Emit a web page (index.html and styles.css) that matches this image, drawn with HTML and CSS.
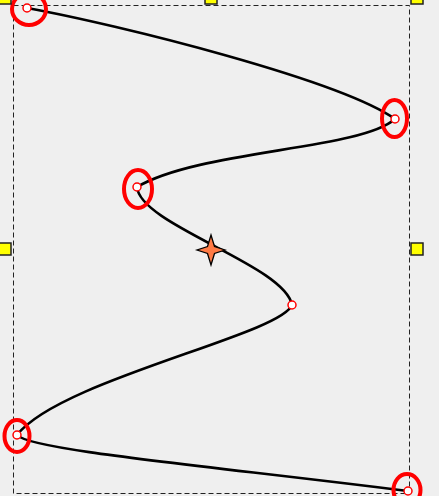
FILE: index.html
```html
<!DOCTYPE html>
<html lang="en">
<head>
<meta charset="utf-8">
<title>Curve editor</title>
<link rel="stylesheet" href="styles.css">
</head>
<body>
<main class="canvas">
  <svg class="drawing" width="439" height="496" viewBox="0 0 439 496" xmlns="http://www.w3.org/2000/svg">
    <rect class="frame" x="13.5" y="5.5" width="396" height="488"/>
    <path class="curve" d="M27,8 C120,25 340,80 395,119 C360,150 200,150 137,187 C140,225 285,265 292,305 C280,335 60,380 17,435 C30,450 200,465 408,491"/>
    <g class="rings">
      <ellipse cx="29" cy="9" rx="17" ry="16"/>
      <ellipse cx="394.5" cy="118.5" rx="12.5" ry="18.5"/>
      <ellipse cx="138" cy="189" rx="14" ry="19"/>
      <ellipse cx="17" cy="436" rx="12.5" ry="16"/>
      <ellipse cx="407" cy="490" rx="13.5" ry="16"/>
    </g>
    <g class="points">
      <circle cx="27" cy="8" r="4"/>
      <circle cx="395" cy="119" r="4"/>
      <circle cx="137" cy="187" r="4"/>
      <circle cx="292" cy="305" r="4"/>
      <circle cx="17" cy="435" r="4"/>
      <circle cx="408" cy="491" r="4"/>
    </g>
    <g class="handles">
      <rect x="-1" y="-8" width="12" height="12"/>
      <rect x="205" y="-8" width="12" height="12"/>
      <rect x="411" y="-8" width="12" height="12"/>
      <rect x="-1" y="243" width="12" height="12"/>
      <rect x="411" y="243" width="12" height="12"/>
    </g>
    <path class="star" d="M211,235 L214.5,246.5 L225,250 L214.5,253.5 L211,265 L207.5,253.5 L197,250 L207.5,246.5 Z"/>
  </svg>
</main>
</body>
</html>
```
FILE: styles.css
```css
html, body {
  margin: 0;
  padding: 0;
  background: #efefef;
  overflow: hidden;
}
.canvas {
  width: 439px;
  height: 496px;
}
.drawing {
  display: block;
}
.frame {
  fill: none;
  stroke: #222222;
  stroke-width: 1;
  stroke-dasharray: 5 3;
}
.curve {
  fill: none;
  stroke: #000000;
  stroke-width: 2.6;
}
.rings ellipse {
  fill: none;
  stroke: #ff0000;
  stroke-width: 4;
}
.points circle {
  fill: #ffffff;
  stroke: #ff0000;
  stroke-width: 1.5;
}
.handles rect {
  fill: #ffff00;
  stroke: #222222;
  stroke-width: 1.5;
}
.star {
  fill: #ff7a45;
  stroke: #000000;
  stroke-width: 1.3;
  stroke-linejoin: miter;
}
```
